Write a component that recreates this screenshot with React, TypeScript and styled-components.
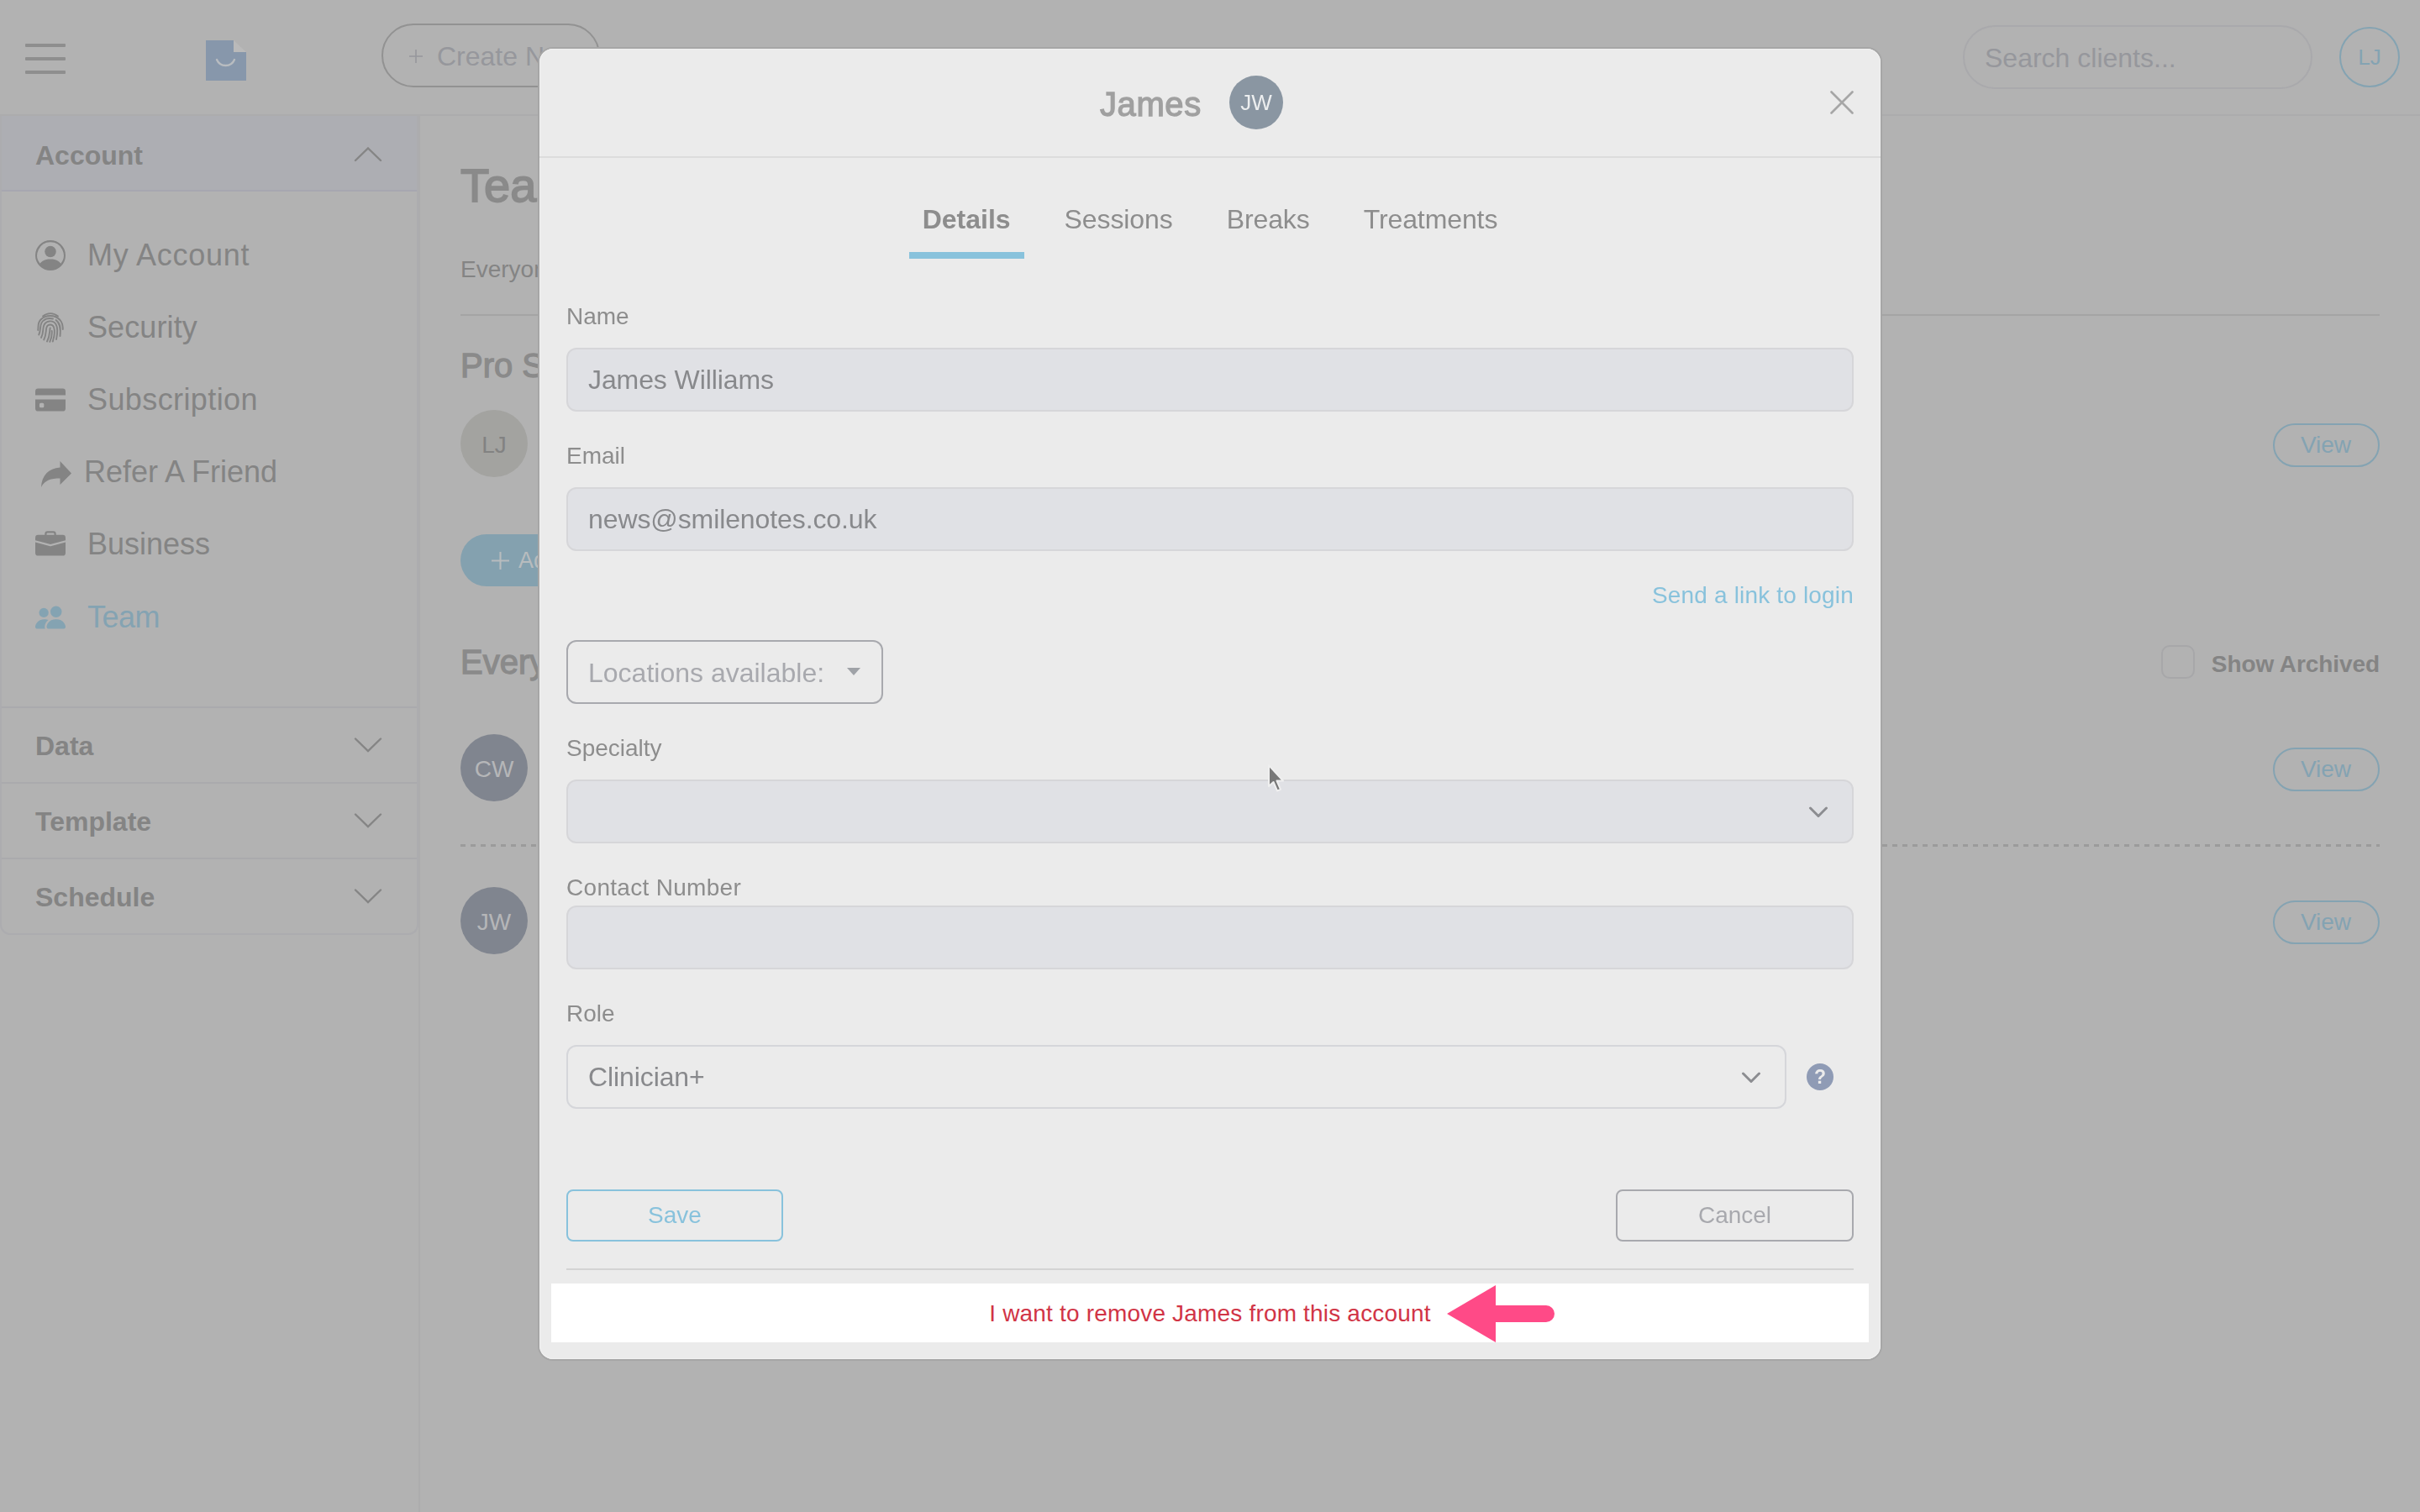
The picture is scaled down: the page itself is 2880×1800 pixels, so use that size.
import React from "react";
import styled, { createGlobalStyle } from "styled-components";
import { BsPersonCircle, BsBriefcaseFill } from "react-icons/bs";

const colors = {
  page: "#b2b2b2",
  text: "#848484",
  muted: "#96979c",
  line: "#a9a9ac",
  blue: "#84a3b2",
  avatar: "#80858f",
  modal: "#ebebeb",
  modalText: "#8d8d8d",
  modalBlue: "#88c2dc",
  modalGrey: "#a8a9ae",
  input: "#e0e1e5",
};

const GlobalStyle = createGlobalStyle`
  * {
    box-sizing: border-box;
  }
  body {
    margin: 0;
    background: ${colors.page};
    color: ${colors.text};
    font-family: "Liberation Sans", Arial, sans-serif;
    overflow: hidden;
  }
  svg {
    display: block;
    flex: none;
  }
`;

const Page = styled.div`
  width: 2880px;
  height: 1800px;
  display: flex;
  flex-direction: column;
`;

/* ---------- top bar ---------- */

const TopBar = styled.header`
  height: 138px;
  flex: none;
  display: flex;
  align-items: flex-start;
  border-bottom: 2px solid #acacad;
  padding: 28px 24px 0 30px;
`;

const MenuIcon = styled.div`
  width: 48px;
  margin-top: 24px;
  display: grid;
  gap: 12px;
  span {
    height: 4px;
    border-radius: 1px;
    background: #8e8e8e;
  }
`;

const Brand = styled.div`
  margin: 20px 161px 0 167px;
`;

const CreateButton = styled.div`
  width: 260px;
  height: 76px;
  border: 2px solid #929292;
  border-radius: 38px;
  display: flex;
  align-items: center;
  gap: 17px;
  padding: 2px 0 0 31px;
  color: ${colors.muted};
  font-size: 32px;
  white-space: nowrap;
`;

const Nav = styled.nav`
  display: flex;
  flex: 1;
  gap: 81px;
  padding: 0 0 0 47px;
  height: 80px;
  align-items: center;
  font-size: 32px;
`;

const SearchBox = styled.div`
  width: 416px;
  height: 76px;
  margin: 2px 32px 0 0;
  border: 2px solid ${colors.line};
  border-radius: 38px;
  padding: 0 24px;
  font-size: 32px;
  line-height: 74px;
  color: ${colors.muted};
`;

const UserBadge = styled.div`
  width: 72px;
  height: 72px;
  margin-top: 4px;
  border: 2px solid ${colors.blue};
  border-radius: 50%;
  text-align: center;
  font-size: 26px;
  line-height: 69px;
  color: ${colors.blue};
`;

/* ---------- sidebar ---------- */

const Body = styled.div`
  flex: 1;
  display: flex;
`;

const Sidebar = styled.aside`
  width: 500px;
  border-right: 2px solid #acacad;
`;

const Accordion = styled.div`
  border: 2px solid #acacaf;
  border-top: 0;
  border-radius: 0 0 12px 12px;
`;

const SectionHead = styled.div<{ $open?: boolean }>`
  height: 90px;
  padding: ${({ $open }) => ($open ? "6px" : "2px")} 41px 0 40px;
  display: flex;
  align-items: center;
  justify-content: space-between;
  font-size: 32px;
  font-weight: 700;
  line-height: 36px;
  border-top: ${({ $open }) => ($open ? "0" : "2px solid #aaaaad")};
  border-bottom: ${({ $open }) => ($open ? "2px solid #a7a7b0" : "0")};
  background: ${({ $open }) => ($open ? "#adaeb3" : "transparent")};
`;

const MenuList = styled.div`
  padding: 33px 0 63px;
`;

const MenuItem = styled.div<{ $active?: boolean; $shift?: boolean; $track?: number }>`
  height: 86.1px;
  display: flex;
  align-items: center;
  gap: ${({ $shift }) => ($shift ? "14px" : "26px")};
  padding-left: ${({ $shift }) => ($shift ? "46px" : "40px")};
  font-size: 36px;
  letter-spacing: ${({ $track }) => $track || 0}px;
  color: ${({ $active }) => ($active ? colors.blue : colors.text)};
`;

/* ---------- team page ---------- */

const Main = styled.main`
  flex: 1;
  padding: 51px 48px 0;
`;

const Title = styled.h1`
  margin: 0;
  font-size: 56px;
  line-height: 64px;
  font-weight: 400;
  -webkit-text-stroke: 1.8px currentColor;
  color: #8a8a8a;
`;

const Lead = styled.p`
  margin: 48px 0 33px;
  font-size: 28px;
  line-height: 40px;
`;

const Rule = styled.div`
  height: 2px;
  background: #a4a4a4;
`;

const Subtitle = styled.h2`
  margin: 0;
  font-size: 40px;
  line-height: 52px;
  font-weight: 400;
  -webkit-text-stroke: 1.3px currentColor;
  color: #8a8a8a;
`;

const SubtitleRow = styled.div<{ $top: number }>`
  display: flex;
  justify-content: space-between;
  height: 50px;
  margin-top: ${({ $top }) => $top}px;
`;

const Member = styled.div<{ $top: number }>`
  height: 80px;
  margin-top: ${({ $top }) => $top}px;
  display: flex;
  align-items: center;
  justify-content: space-between;
`;

const Avatar = styled.div<{ $plain?: boolean }>`
  width: 80px;
  height: 80px;
  border-radius: 50%;
  display: flex;
  align-items: center;
  justify-content: center;
  padding-top: 4px;
  font-size: 28px;
  background: ${({ $plain }) => ($plain ? "#a3a3a0" : colors.avatar)};
  color: ${({ $plain }) => ($plain ? "#828282" : "#b5b6b8")};
`;

const ViewButton = styled.div`
  width: 127px;
  height: 52px;
  margin-top: 4px;
  border: 2px solid ${colors.blue};
  border-radius: 26px;
  padding-right: 1px;
  text-align: center;
  font-size: 28px;
  line-height: 47px;
  color: ${colors.blue};
`;

const AddButton = styled.div`
  width: 280px;
  height: 62px;
  margin-top: 68px;
  border-radius: 31px;
  padding-left: 37px;
  display: flex;
  align-items: center;
  gap: 11px;
  font-size: 27px;
  background: #84a1af;
  color: #b8bcbe;
`;

const ArchivedToggle = styled.div`
  display: flex;
  gap: 20px;
  font-size: 28px;
  font-weight: 700;
  line-height: 57px;
  letter-spacing: -0.08px;
`;

const Checkbox = styled.div`
  width: 40px;
  height: 40px;
  margin-top: 6px;
  border: 2px solid #a7a7a9;
  border-radius: 10px;
`;

const Dashes = styled.div`
  height: 3px;
  margin-top: 51px;
  background: repeating-linear-gradient(to right, #9b9b9b 0 6px, transparent 6px 12px);
`;

/* ---------- modal ---------- */

const Modal = styled.section`
  position: fixed;
  top: 58px;
  left: 642px;
  width: 1596px;
  height: 1560px;
  border-radius: 16px;
  background: ${colors.modal};
  box-shadow: 0 0 0 2px #a6a6a6, inset 0 0 0 1px #f1f1f1;
  color: ${colors.modalText};
`;

const ModalHeader = styled.div`
  height: 130px;
  border-bottom: 2px solid #dcdcdc;
  display: flex;
  align-items: center;
  padding: 0 32px 0 667px;
`;

const ModalTitle = styled.div`
  width: 154px;
  font-size: 40px;
  line-height: 46px;
  margin-top: 3px;
  color: #a0a0a0;
  -webkit-text-stroke: 1.3px currentColor;
  letter-spacing: 0.6px;
`;

const SmallAvatar = styled.div`
  width: 64px;
  height: 64px;
  border-radius: 50%;
  background: #8a96a2;
  color: #eceeef;
  font-size: 26px;
  line-height: 65px;
  text-align: center;
  margin-right: auto;
`;

const Tabs = styled.div`
  display: flex;
  justify-content: center;
  gap: 32px;
  margin: 34px 0 48px;
`;

const Tab = styled.div<{ $active?: boolean }>`
  height: 86px;
  padding: 0 16px;
  font-size: 32px;
  line-height: 78px;
  letter-spacing: ${({ $active }) => ($active ? 0 : -0.1)}px;
  font-weight: ${({ $active }) => ($active ? 700 : 400)};
  border-bottom: 8px solid ${({ $active }) => ($active ? colors.modalBlue : "transparent")};
`;

const Form = styled.div`
  padding: 0 32px;
`;

const Label = styled.div<{ $tight?: boolean }>`
  height: 40px;
  margin-bottom: ${({ $tight }) => ($tight ? 2 : 18)}px;
  font-size: 28px;
  line-height: 42px;
  letter-spacing: ${({ $tight }) => ($tight ? 0.3 : 0)}px;
`;

const Input = styled.div<{ $outline?: boolean }>`
  height: 76px;
  margin-bottom: 32px;
  padding: 1px 28px 0 24px;
  border: 2px solid ${({ $outline }) => ($outline ? "#d5d6da" : "#d6d6d9")};
  border-radius: 12px;
  background: ${({ $outline }) => ($outline ? "transparent" : colors.input)};
  display: flex;
  align-items: center;
  justify-content: space-between;
  font-size: 32px;
  letter-spacing: -0.1px;
  color: #88898c;
`;

const LoginLink = styled.div`
  height: 40px;
  margin-bottom: 34px;
  text-align: right;
  font-size: 28px;
  line-height: 41px;
  letter-spacing: 0.17px;
  color: ${colors.modalBlue};
`;

const LocationsButton = styled.div`
  width: 377px;
  height: 76px;
  margin-bottom: 32px;
  padding: 2px 25px 0 24px;
  border: 2px solid ${colors.modalGrey};
  border-radius: 12px;
  display: flex;
  align-items: center;
  justify-content: space-between;
  font-size: 32px;
  color: ${colors.modalGrey};
`;

const Caret = styled.i`
  margin-top: -3px;
  border: 8px solid transparent;
  border-top: 9px solid #9fa2a7;
  border-bottom: 0;
`;

const RoleRow = styled.div`
  display: grid;
  grid-template-columns: 1452px 32px;
  gap: 24px;
  height: 76px;
  margin-bottom: 96px;
`;

const HelpBadge = styled.div`
  width: 32px;
  height: 32px;
  margin-top: 22px;
  border-radius: 50%;
  background: #8f9bb5;
  color: ${colors.modal};
  font-size: 23px;
  font-weight: 700;
  line-height: 33px;
  text-align: center;
`;

const Actions = styled.div`
  display: flex;
  justify-content: space-between;
  padding-bottom: 32px;
  border-bottom: 2px solid #d3d3d3;
`;

const ActionButton = styled.div<{ $primary?: boolean }>`
  width: ${({ $primary }) => ($primary ? 258 : 283)}px;
  height: 62px;
  border: 2px solid currentColor;
  border-radius: 8px;
  color: ${({ $primary }) => ($primary ? colors.modalBlue : colors.modalGrey)};
  text-align: center;
  font-size: 28px;
  line-height: 57px;
`;

const RemoveStrip = styled.div`
  position: relative;
  height: 70px;
  margin: 16px 14px 0;
  background: #ffffff;
  color: #d13446;
  text-align: center;
  font-size: 28px;
  line-height: 72px;
  letter-spacing: 0.18px;
`;

const Pointer = styled.div`
  position: absolute;
  left: 1066px;
  top: 2px;
`;

const Cursor = styled.div`
  position: absolute;
  left: 864px;
  top: 850px;
`;

interface ChevronProps {
  up?: boolean;
}

const SectionChevron: React.FC<ChevronProps> = ({ up }) => (
  <svg width="34" height="20" viewBox="0 0 34 20" fill="none" stroke="#858585" strokeWidth="2.4" strokeLinecap="round">
    <path d={up ? "M2 16 17 1.500 32 16" : "M2 1.500 17 16 32 1.500"} />
  </svg>
);

const SelectChevron: React.FC = () => (
  <svg width="24" height="14" viewBox="0 0 24 14" fill="none" stroke="#8c8d91" strokeWidth="3" strokeLinecap="round" strokeLinejoin="round">
    <path d="m2.500 2 9.500 9.500 9.500-9.500" />
  </svg>
);

const Plus: React.FC<{ size: number }> = ({ size }) => (
  <svg width={size} height={size} viewBox="0 0 20 20" stroke="currentColor" strokeWidth="2">
    <path d="M10 0v20M0 10h20" />
  </svg>
);

const FingerprintIcon: React.FC = () => (
  <svg width="36" height="36" viewBox="0 0 36 36" fill="none" stroke="currentColor" strokeWidth="1.900" strokeLinecap="round">
    <path d="M9 4.500C14.500 0 21.500 0 27 4.500" />
    <path d="M3.200 21C4 16 2.500 12.500 6.500 8.500 12.500 2.500 23.500 2.500 29.500 9 32 12 32.800 15.500 32.800 20" />
    <path d="M4.200 26.500C6.500 22 5.500 17 7 13.500 9.500 7.500 16 6 21 7.500M24.500 9C29.500 12.500 30.500 18 29.500 28" />
    <path d="M7 30C10 24 8.800 20 10 16 12 9.500 21 8.500 24.500 14 27.500 19 26.300 26 25 32" />
    <path d="M10.200 32.500C13.500 26 12.200 21.500 13.500 17.500 15 13.500 20.500 13.500 22 17.500 23.700 22 22.500 29 20.800 34.500" />
    <path d="M14 34.500C17.500 28 16.800 23.500 17.700 18.500M17.300 34.800C19.300 30.500 20 26 19.700 22" />
  </svg>
);

const ReferIcon: React.FC = () => (
  <svg width="38" height="38" viewBox="0 -6 38 38" fill="currentColor">
    <path d="M23.500 0 37 14.500 23.500 28V20.500C12.500 20.500 5.500 22.500 1 31 1.500 17.500 9.500 8.500 23.500 7.500z" />
  </svg>
);

const CardIcon: React.FC = () => (
  <svg width="36" height="36" viewBox="0 0 16 16" fill="currentColor">
    <path d="M0 3.500A1.500 1.500 0 0 1 1.500 2h13A1.500 1.500 0 0 1 16 3.500v2H0z" />
    <path
      fillRule="evenodd"
      d="M0 7.800h16v4.700a1.500 1.500 0 0 1-1.500 1.500h-13A1.500 1.500 0 0 1 0 12.500zm2.900 1.900a.7.700 0 0 0-.7.700v1a.7.700 0 0 0 .7.700h1a.7.700 0 0 0 .7-.7v-1a.7.700 0 0 0-.7-.7z"
    />
  </svg>
);

const TeamIcon: React.FC = () => (
  <svg width="36" height="36" viewBox="0 0 16 16" fill="currentColor">
    <path d="M7 14s-1 0-1-1 1-4 5-4 5 3 5 4-1 1-1 1H7zm4-6a3 3 0 1 0 0-6 3 3 0 0 0 0 6z" />
    <path d="M5.216 14A2.238 2.238 0 0 1 5 13c0-1.355.68-2.750 1.936-3.720A6.325 6.325 0 0 0 5 9c-4 0-5 3-5 4s1 1 1 1h4.216z" />
    <path d="M4.500 8a2.500 2.500 0 1 0 0-5 2.500 2.500 0 0 0 0 5z" />
  </svg>
);

const menu = [
  { label: "My Account", icon: <BsPersonCircle size={36} />, track: 0.7 },
  { label: "Security", icon: <FingerprintIcon />, track: 0.1 },
  { label: "Subscription", icon: <CardIcon />, track: 0.4 },
  { label: "Refer A Friend", icon: <ReferIcon />, shift: true, track: 0 },
  { label: "Business", icon: <BsBriefcaseFill size={36} />, track: 0 },
  { label: "Team", icon: <TeamIcon />, active: true, track: -0.5 },
];

const App: React.FC = () => (
  <>
    <GlobalStyle />
    <Page>
      <TopBar>
        <MenuIcon>
          <span />
          <span />
          <span />
        </MenuIcon>
        <Brand>
          <svg width="48" height="48" viewBox="0 0 48 48">
            <path d="M0 0h33v14h15v34H0z" fill="#8797ab" />
            <path d="M33 0 48 14H33z" fill="#bababa" />
            <path d="M13 23q3 7 10.500 7T34 23" fill="none" stroke="#b8bcc0" strokeWidth="2.400" strokeLinecap="round" />
          </svg>
        </Brand>
        <CreateButton>
          <Plus size={16} />
          Create New
        </CreateButton>
        <Nav>
          <span>Notepad</span>
          <span>Schedule</span>
          <span>More</span>
        </Nav>
        <SearchBox>Search clients...</SearchBox>
        <UserBadge>LJ</UserBadge>
      </TopBar>

      <Body>
        <Sidebar>
          <Accordion>
            <SectionHead $open>
              Account
              <SectionChevron up />
            </SectionHead>
            <MenuList>
              {menu.map((item) => (
                <MenuItem key={item.label} $active={item.active} $shift={item.shift} $track={item.track}>
                  {item.icon}
                  {item.label}
                </MenuItem>
              ))}
            </MenuList>
            {["Data", "Template", "Schedule"].map((name) => (
              <SectionHead key={name}>
                {name}
                <SectionChevron />
              </SectionHead>
            ))}
          </Accordion>
        </Sidebar>

        <Main>
          <Title>Team</Title>
          <Lead>Everyone</Lead>
          <Rule />
          <SubtitleRow $top={33}>
            <Subtitle>Pro Seats</Subtitle>
          </SubtitleRow>
          <Member $top={29}>
            <Avatar $plain>LJ</Avatar>
            <ViewButton>View</ViewButton>
          </Member>
          <AddButton>
            <Plus size={21} />
            Add Seat
          </AddButton>
          <SubtitleRow $top={64}>
            <Subtitle>Everyone</Subtitle>
            <ArchivedToggle>
              <Checkbox />
              Show Archived
            </ArchivedToggle>
          </SubtitleRow>
          <Member $top={62}>
            <Avatar>CW</Avatar>
            <ViewButton>View</ViewButton>
          </Member>
          <Dashes />
          <Member $top={48}>
            <Avatar>JW</Avatar>
            <ViewButton>View</ViewButton>
          </Member>
        </Main>
      </Body>
    </Page>

    <Modal>
      <ModalHeader>
        <ModalTitle>James</ModalTitle>
        <SmallAvatar>JW</SmallAvatar>
        <svg width="28" height="28" viewBox="0 0 28 28" stroke="#a6a6a6" strokeWidth="2.600" strokeLinecap="round">
          <path d="m1.500 1.500 25 25M26.500 1.500l-25 25" />
        </svg>
      </ModalHeader>
      <Tabs>
        <Tab $active>Details</Tab>
        <Tab>Sessions</Tab>
        <Tab>Breaks</Tab>
        <Tab>Treatments</Tab>
      </Tabs>
      <Form>
        <Label>Name</Label>
        <Input>James Williams</Input>
        <Label>Email</Label>
        <Input>news@smilenotes.co.uk</Input>
        <LoginLink>Send a link to login</LoginLink>
        <LocationsButton>
          Locations available:
          <Caret />
        </LocationsButton>
        <Label>Specialty</Label>
        <Input>
          <span />
          <SelectChevron />
        </Input>
        <Label $tight>Contact Number</Label>
        <Input />
        <Label>Role</Label>
        <RoleRow>
          <Input $outline>
            Clinician+
            <SelectChevron />
          </Input>
          <HelpBadge>?</HelpBadge>
        </RoleRow>
        <Actions>
          <ActionButton $primary>Save</ActionButton>
          <ActionButton>Cancel</ActionButton>
        </Actions>
      </Form>
      <RemoveStrip>
        I want to remove James from this account
        <Pointer>
          <svg width="130" height="68" viewBox="0 0 130 68" fill="#ff4a87">
            <path d="M0 34 58 0v24h60a10 10 0 0 1 0 20H58v24z" />
          </svg>
        </Pointer>
      </RemoveStrip>
      <Cursor>
        <svg width="28" height="38" viewBox="0 0 28 38" fill="#787878" stroke="#efefef" strokeWidth="2" strokeLinejoin="round">
          <path d="M4 3v25l5.500-5 4.500 10.500 4-1.700-4.500-10.300H21z" />
        </svg>
      </Cursor>
    </Modal>
  </>
);

export default App;
